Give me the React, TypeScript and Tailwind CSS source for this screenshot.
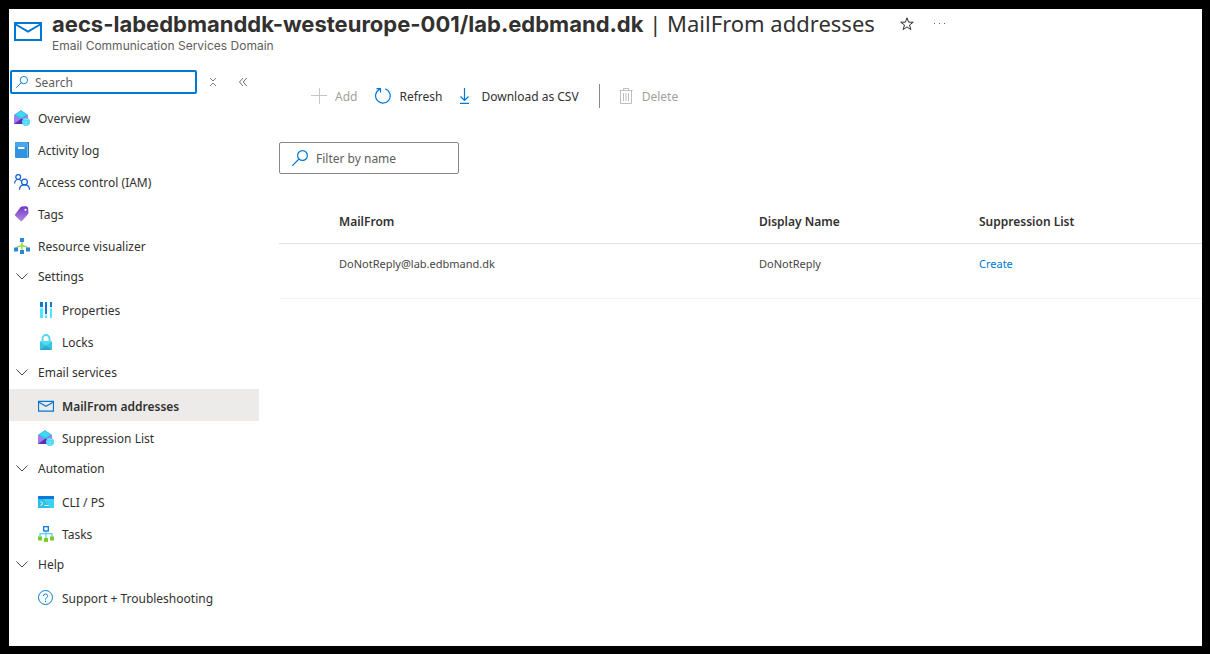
import { useState } from "react"
import type React from "react"

type IconProps = { className?: string }

function MailIcon({ className = "h-4 w-4" }: IconProps): React.ReactElement {
  return (
    <svg className={className} viewBox="0 0 28 28" fill="none" stroke="#0078d4" strokeWidth="2">
      <path d="M1 6h26v17H1z" />
      <path d="M1 7l13 7.500 13-7.500" />
    </svg>
  )
}

function MailServiceIcon(): React.ReactElement {
  return (
    <svg className="h-4 w-4" viewBox="0 0 16 16">
      <path d="M0 5L7 .3 14 5v9H0z" fill="#a67af4" />
      <path d="M0 5L7 .3 14 5 7 9.300z" fill="#32bedd" />
      <path d="M1.500 4.500L7 .8l5.500 3.700L7 8z" fill="#3fd8f4" />
      <path d="M0 14l7.500-5.500L14 12v2z" fill="#5f2fb0" />
      <circle cx="12" cy="12" r="4" fill="#3fd3f2" />
      <path d="M8 12h8M12 8v8M9 9.700h6M9 14.300h6" stroke="#9cebff" strokeWidth=".6" />
    </svg>
  )
}

function LogIcon(): React.ReactElement {
  return (
    <svg className="h-4 w-4" viewBox="0 0 16 16">
      <path d="M3 0h11a1 1 0 0 1 1 1v13.500a1 1 0 0 1-1 1H3z" fill="#0f5fa8" />
      <path d="M12 1h2.200v13.500H12z" fill="#b9dcf7" />
      <path d="M2 0h10.500a1 1 0 0 1 1 1v14a1 1 0 0 1-1 1H2a1 1 0 0 1-1-1V1a1 1 0 0 1 1-1z" fill="#2f93e0" />
      <path d="M2 0h10.500a1 1 0 0 1 1 1v4H1V1a1 1 0 0 1 1-1z" fill="#4aa6ea" />
      <rect x="4" y="5" width="6.500" height="2" rx=".5" fill="#fff" />
    </svg>
  )
}

function PeopleIcon(): React.ReactElement {
  return (
    <svg className="h-4 w-4" viewBox="0 0 16 16" fill="none" stroke="#0f5fd6" strokeWidth="1.200">
      <circle cx="4.200" cy="3" r="2.400" />
      <path d="M.6 9.500C.7 7 2 5.500 4.200 5.500c1.300 0 2.300.5 2.900 1.300" />
      <circle cx="10.500" cy="8" r="2.900" />
      <path d="M5.500 15.800c0-2.900 2-4.900 5-4.900s5 2 5 4.900" />
    </svg>
  )
}

function TagIcon(): React.ReactElement {
  return (
    <svg className="h-4 w-4" viewBox="0 0 16 16">
      <defs>
        <linearGradient id="tag" x1="0" y1="0" x2="0" y2="1">
          <stop offset="0" stopColor="#7333c9" />
          <stop offset="1" stopColor="#b08be0" />
        </linearGradient>
      </defs>
      <path d="M7.700.6L12 .2a1.200 1.200 0 0 1 .9.300l1 1.100a1.200 1.200 0 0 1 .3.800l.3 4.400a1.500 1.500 0 0 1-.4 1.200l-6 7a1 1 0 0 1-1.500.1L1.200 9.800a1 1 0 0 1 0-1.500l5.500-7.200a1.500 1.500 0 0 1 1-.5z" fill="url(#tag)" />
      <circle cx="11.500" cy="3.800" r="1.100" fill="#fff" />
    </svg>
  )
}

function VisualizerIcon(): React.ReactElement {
  return (
    <svg className="h-4 w-4" viewBox="0 0 16 16">
      <path d="M8 4v8M2 10.500C3.500 8 5.500 7.800 8 7.800s4.500.2 6 2.700" stroke="#86d633" strokeWidth="1.200" fill="none" />
      <circle cx="8" cy="7.800" r="1.600" fill="#9be04a" />
      <path d="M6 0h4v4H6zM0 9.500h4v4H0zM12 9.500h4v4h-4zM6 12h4v4H6z" fill="#2a86d9" />
    </svg>
  )
}

function PropertiesIcon(): React.ReactElement {
  return (
    <svg className="h-4 w-4" viewBox="0 0 16 16">
      <path d="M2 5h3v11H2zM7 12h2v4H7zM12 5h2v11h-2z" fill="#50e6ff" />
      <path d="M2 0h3v5H2zM7 0h2v12H7zM12 0h2v5h-2z" fill="#0f78d4" />
      <path d="M2 5h3v1.500H2zM7 12h2v1.500H7zM12 5h2v1.500h-2z" fill="#c3f1ff" />
    </svg>
  )
}

function LockIcon(): React.ReactElement {
  return (
    <svg className="h-4 w-4" viewBox="0 0 16 16">
      <path d="M4.500 8V4.800a3.500 3.800 0 0 1 7 0V8" fill="none" stroke="#50d5f0" strokeWidth="1.800" />
      <rect x="2" y="7" width="12" height="9" rx=".8" fill="#4fdcf5" />
      <path d="M2 15.500L8 11l6 4.500V16H2z" fill="#27aacb" />
      <path d="M2 7.500l6 4.500-6 3.500zM14 7.500L8 12l6 3.500z" fill="#38c3e2" />
    </svg>
  )
}

function TerminalIcon(): React.ReactElement {
  return (
    <svg className="h-4 w-4" viewBox="0 0 16 16">
      <path d="M0 4h16v9.500a.5.500 0 0 1-.5.500H.5a.5.500 0 0 1-.5-.5z" fill="#3bd2f2" />
      <path d="M0 4h4l8 10H.5a.5.500 0 0 1-.5-.5z" fill="#2bbfe3" />
      <path d="M.5 2h15a.5.500 0 0 1 .5.500V5H0V2.500A.5.500 0 0 1 .5 2z" fill="#0f78d4" />
      <path d="M2.500 7.500L5 9.500l-2.500 2M6.500 11.500h4" stroke="#fff" strokeWidth="1" fill="none" />
    </svg>
  )
}

function TasksIcon(): React.ReactElement {
  return (
    <svg className="h-4 w-4" viewBox="0 0 16 16">
      <path d="M8 5v7M2 11V7.700h12V11" stroke="#4fd3ee" strokeWidth="1.200" fill="none" />
      <rect x="5.700" y=".7" width="4.600" height="4.300" fill="#fff" stroke="#0f78d4" strokeWidth="1.300" />
      <path d="M0 10.500h4v4H0zM6 12h4v4H6zM12 10.500h4v4h-4z" fill="#7ccb27" />
    </svg>
  )
}

function HelpIcon(): React.ReactElement {
  return (
    <svg className="h-4 w-4" viewBox="0 0 16 16" fill="none" stroke="#0078d4">
      <circle cx="7.500" cy="7.500" r="7" />
      <path d="M5.500 6a2 2 0 1 1 3 1.700c-.7.4-1 .8-1 1.800M7.500 10.700v1.300" />
    </svg>
  )
}

function SearchIcon({ className }: IconProps): React.ReactElement {
  return (
    <svg className={className} viewBox="0 0 16 16" fill="none" stroke="#0078d4" strokeWidth="1.200">
      <circle cx="10.500" cy="5.500" r="4.900" />
      <path d="M7 9L.3 15.700" />
    </svg>
  )
}

function ChevronIcon(): React.ReactElement {
  return (
    <svg className="h-3 w-3" viewBox="0 0 12 12" fill="none" stroke="#484644">
      <path d="M.4 2.500L6 8l5.600-5.500" />
    </svg>
  )
}

type Item = { label: string; icon: React.ReactElement }
type Group = { label: string; items: Item[] }

const topItems: Item[] = [
  { label: "Overview", icon: <MailServiceIcon /> },
  { label: "Activity log", icon: <LogIcon /> },
  { label: "Access control (IAM)", icon: <PeopleIcon /> },
  { label: "Tags", icon: <TagIcon /> },
  { label: "Resource visualizer", icon: <VisualizerIcon /> },
]

const groups: Group[] = [
  {
    label: "Settings",
    items: [
      { label: "Properties", icon: <PropertiesIcon /> },
      { label: "Locks", icon: <LockIcon /> },
    ],
  },
  {
    label: "Email services",
    items: [
      { label: "MailFrom addresses", icon: <MailIcon /> },
      { label: "Suppression List", icon: <MailServiceIcon /> },
    ],
  },
  {
    label: "Automation",
    items: [
      { label: "CLI / PS", icon: <TerminalIcon /> },
      { label: "Tasks", icon: <TasksIcon /> },
    ],
  },
  { label: "Help", items: [{ label: "Support + Troubleshooting", icon: <HelpIcon /> }] },
]

function NavGroup({ group, active }: { group: Group; active: string }): React.ReactElement {
  const [isOpen, setIsOpen] = useState<boolean>(true)

  return (
    <div>
      <button
        className="flex h-8 w-full items-center gap-2.5 pl-[7px] text-left"
        aria-expanded={isOpen}
        onClick={() => setIsOpen(!isOpen)}
      >
        <ChevronIcon />
        {group.label}
      </button>
      {isOpen &&
        group.items.map((item) => (
          <a
            key={item.label}
            href="#"
            className={
              item.label === active
                ? "flex h-8 items-center gap-2 bg-[#edebe9] pt-0.5 pl-[29px] font-semibold"
                : "flex h-8 items-center gap-2 pt-0.5 pl-[29px]"
            }
          >
            {item.icon}
            <span className="pt-0.5">{item.label}</span>
          </a>
        ))}
    </div>
  )
}

function Sidebar(): React.ReactElement {
  return (
    <aside className="w-[250px] shrink-0">
      <div className="flex items-center">
        <label className="ml-px flex h-6 w-[187px] items-center gap-[7px] rounded-xs border-2 border-[#0078d4] pl-1">
          <SearchIcon className="h-3 w-3 shrink-0" />
          <input
            type="text"
            aria-label="Search"
            placeholder="Search"
            className="w-full min-w-0 pt-0.5 outline-none placeholder:text-[#605e5c]"
          />
        </label>
        <button className="ml-3" aria-label="Collapse all groups">
          <svg className="h-2 w-2" viewBox="0 0 8 8" fill="none" stroke="#605e5c" strokeWidth=".8">
            <path d="M1 0l3 3 3-3M1 8l3-3 3 3" />
          </svg>
        </button>
        <button className="ml-[22px]" aria-label="Collapse menu">
          <svg className="h-2 w-2" viewBox="0 0 8 8" fill="none" stroke="#484644" strokeWidth=".8">
            <path d="M4 0L.5 4 4 8M7.700 0L4.200 4l3.500 4" />
          </svg>
        </button>
      </div>
      <nav className="mt-[7px]">
        {topItems.map((item) => (
          <a key={item.label} href="#" className="flex h-8 items-center gap-2 pt-0.5 pl-[5px]">
            {item.icon}
            <span className="pt-0.5">{item.label}</span>
          </a>
        ))}
        {groups.map((group) => (
          <NavGroup key={group.label} group={group} active="MailFrom addresses" />
        ))}
      </nav>
    </aside>
  )
}

function Toolbar(): React.ReactElement {
  return (
    <div className="flex h-6 items-center">
      <button disabled className="ml-8 flex items-center gap-2 text-[#a19f9d]">
        <svg className="h-4 w-4" viewBox="0 0 16 16" stroke="#c8c6c4">
          <path d="M8.500 0v16M0 7.500h16" />
        </svg>
        <span className="pt-0.5">Add</span>
      </button>
      <button className="ml-[18px] flex items-center gap-2">
        <svg className="h-4 w-4" viewBox="0 0 16 16" fill="none" stroke="#0078d4" strokeWidth="1.200">
          <path d="M10.300 .9A7.300 7.300 0 1 1 5 1.100M1.500 .6h4v3.900" />
        </svg>
        <span className="pt-0.5">Refresh</span>
      </button>
      <button className="ml-[15px] flex items-center gap-2">
        <svg className="h-4 w-4" viewBox="0 0 16 16" fill="none" stroke="#0078d4" strokeWidth="1.200">
          <path d="M7.500 0v12M3.500 8.500l4 4 4-4M3 15.400h9" />
        </svg>
        <span className="pt-0.5">Download as CSV</span>
      </button>
      <div className="mr-[18px] ml-5 h-6 w-px bg-[#8a8886]" />
      <button disabled className="flex items-center gap-2 text-[#a19f9d]">
        <svg className="h-4 w-4" viewBox="0 0 16 16" fill="none" stroke="#c0bebc">
          <path d="M1.500 2.500h13M5.500 2.500V.5h5v2M2.500 2.500v13h11v-13M5.500 5v8M8 5v8M10.500 5v8" />
        </svg>
        <span className="pt-0.5">Delete</span>
      </button>
    </div>
  )
}

function AddressTable(): React.ReactElement {
  return (
    <table className="w-full table-fixed text-left">
      <thead>
        <tr className="h-11 border-b border-[#e1dfdd]">
          <th className="w-[480px] pt-0.5 pl-[60px] font-semibold">MailFrom</th>
          <th className="w-[220px] pt-0.5 font-semibold">Display Name</th>
          <th className="pt-0.5 font-semibold">Suppression List</th>
        </tr>
      </thead>
      <tbody>
        <tr className="h-[55px] border-b border-[#f3f2f1] align-top text-[11px] text-[#484644]">
          <td className="pt-3 pl-[60px]">DoNotReply@lab.edbmand.dk</td>
          <td className="pt-3">DoNotReply</td>
          <td className="pt-3">
            <a href="#" className="text-[#0078d4]">
              Create
            </a>
          </td>
        </tr>
      </tbody>
    </table>
  )
}

export default function App(): React.ReactElement {
  return (
    <div className="min-h-screen border-8 border-t-[9px] border-l-[9px] border-black bg-white font-['Noto_Sans',sans-serif] text-[12px] leading-4 text-[#323130]">
      <header className="flex gap-2.5 pl-[5px]">
        <MailIcon className="mt-2 h-7 w-7 shrink-0" />
        <div>
          <div className="flex items-center">
            <h1 className="text-[22px] leading-7 whitespace-nowrap">
              <span className="font-['Inter',sans-serif] font-bold">
                aecs-labedbmanddk-westeurope-001/lab.edbmand.dk
              </span>{" "}
              | MailFrom addresses
            </h1>
            <button className="ml-6" aria-label="Add to favorites">
              <svg className="h-4 w-4" viewBox="0 0 16 16" fill="none" stroke="#323130">
                <path d="M8 1.800l1.600 4.400h4.700l-3.800 2.800 1.400 4.600L8 10.900l-3.900 2.700L5.500 9 1.700 6.200h4.700z" />
              </svg>
            </button>
            <button className="ml-4" aria-label="More actions">
              <svg className="h-4 w-4" viewBox="0 0 16 16" fill="#605e5c">
                <path d="M3 7h1v1H3zM8 7h1v1H8zM13 7h1v1h-1z" />
              </svg>
            </button>
          </div>
          <p className="font-['Inter',sans-serif] text-[#605e5c]">Email Communication Services Domain</p>
        </div>
      </header>
      <div className="mt-4 flex">
        <Sidebar />
        <main className="min-w-0 flex-1 pt-3.5 pl-5">
          <Toolbar />
          <label className="mt-[34px] flex h-8 w-[180px] items-center gap-2 rounded-xs border border-[#8a8886] pl-3">
            <SearchIcon className="h-4 w-4 shrink-0" />
            <input
              type="text"
              aria-label="Filter by name"
              placeholder="Filter by name"
              className="w-full min-w-0 pt-0.5 outline-none placeholder:text-[#605e5c]"
            />
          </label>
          <div className="mt-[25px]">
            <AddressTable />
          </div>
        </main>
      </div>
    </div>
  )
}
